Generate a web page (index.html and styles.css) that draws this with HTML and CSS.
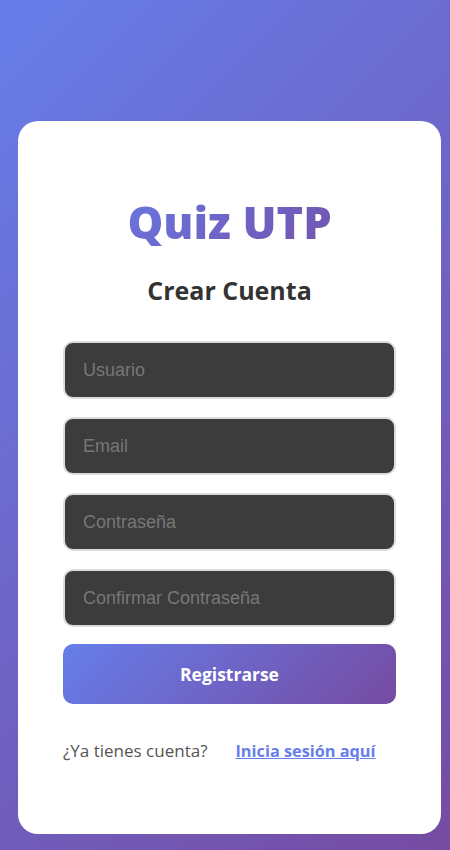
FILE: index.html
```html
<!DOCTYPE html>
<html lang="es">
<head>
<meta charset="utf-8">
<title>Quiz UTP - Crear Cuenta</title>
<link rel="stylesheet" href="styles.css">
</head>
<body>
<main class="card">
  <h1 class="brand">Quiz UTP</h1>
  <h2 class="subtitle">Crear Cuenta</h2>
  <form class="form">
    <input class="field" type="text" placeholder="Usuario">
    <input class="field" type="email" placeholder="Email">
    <input class="field" type="password" placeholder="Contraseña">
    <input class="field" type="password" placeholder="Confirmar Contraseña">
    <button class="submit" type="button">Registrarse</button>
  </form>
  <p class="footer">
    <span class="muted">¿Ya tienes cuenta?</span>
    <a class="link" href="#">Inicia sesión aquí</a>
  </p>
</main>
</body>
</html>
```

FILE: styles.css
```css
* { box-sizing: border-box; }
html, body { margin: 0; padding: 0; }
body {
  width: 450px;
  min-height: 850px;
  background: linear-gradient(135deg, #667eea 0%, #764ba2 100%);
  font-family: "Open Sans", "Noto Sans", sans-serif;
  padding: 121px 9px 16px 18px;
}
.card {
  background: #fff;
  border-radius: 20px;
  width: 423px;
  height: 713px;
  padding: 71px 45px 0 45px;
  display: flex;
  flex-direction: column;
}
.brand {
  margin: 0;
  text-align: center;
  font-size: 45px;
  line-height: 60px;
  font-weight: 800;
  background: linear-gradient(135deg, #667eea 0%, #764ba2 100%);
  -webkit-background-clip: text;
  background-clip: text;
  color: transparent;
}
.subtitle {
  margin: 22px 0 0;
  text-align: center;
  font-size: 25px;
  line-height: 32px;
  font-weight: 700;
  color: #333;
}
.form {
  margin-top: 35px;
  display: flex;
  flex-direction: column;
  gap: 18px;
}
.field {
  height: 58px;
  width: 100%;
  background: #3c3c3c;
  border: 2px solid #ddd;
  border-radius: 10px;
  padding: 0 18px;
  font-family: "Liberation Sans", Arial, sans-serif;
  font-size: 18px;
  color: #eee;
  outline: none;
}
.field::placeholder { color: #777; }
.submit {
  margin-top: -1px;
  height: 60px;
  width: 100%;
  border: none;
  border-radius: 10px;
  background: linear-gradient(135deg, #667eea 0%, #764ba2 100%);
  color: #fff;
  font-family: "Open Sans", "Noto Sans", sans-serif;
  font-size: 17.5px;
  font-weight: 700;
}
.footer {
  margin: 35px 0 0;
  display: flex;
  align-items: baseline;
  gap: 28px;
  font-size: 17px;
  line-height: 24px;
}
.muted { color: #555; }
.link {
  color: #667eea;
  font-size: 16.3px;
  font-weight: 700;
  text-decoration: underline;
}
```
